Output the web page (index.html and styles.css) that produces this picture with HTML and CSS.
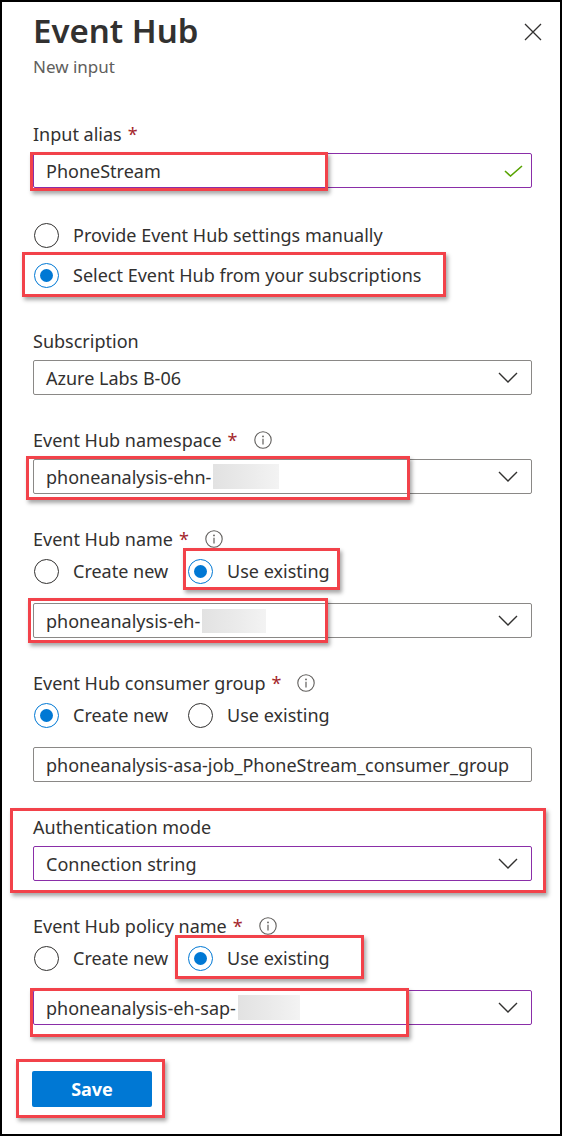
FILE: index.html
```html
<!DOCTYPE html>
<html lang="en">
<head>
<meta charset="utf-8">
<title>Event Hub - New input</title>
<link rel="stylesheet" href="styles.css">
</head>
<body>
<div class="panel">
  <header class="head">
    <div class="titles">
      <h1 class="title">Event Hub</h1>
      <p class="subtitle">New input</p>
    </div>
    <button class="close" type="button" aria-label="Close">
      <svg width="18" height="18" viewBox="0 0 18 18"><path d="M1 1 L17 17 M17 1 L1 17" stroke="#323130" stroke-width="1.3" fill="none"/></svg>
    </button>
  </header>

  <form class="form">
    <div class="field field-first">
      <div class="label">Input alias <span class="req">*</span></div>
      <div class="box dirty">
        <span class="val">PhoneStream</span>
        <svg class="check" width="19" height="12" viewBox="0 0 19 12"><path d="M1 6 L6.5 11 L18 1" stroke="#57a300" stroke-width="1.6" fill="none"/></svg>
        <span class="hl hl-alias"></span>
      </div>
    </div>

    <div class="choices-v">
      <div class="choice"><span class="radio"></span><span>Provide Event Hub settings manually</span></div>
      <div class="choice"><span class="radio on"></span><span>Select Event Hub from your subscriptions</span><span class="hl hl-select"></span></div>
    </div>

    <div class="field field-sub">
      <div class="label">Subscription</div>
      <div class="box">
        <span class="val">Azure Labs B-06</span>
        <svg class="chev" width="20" height="11" viewBox="0 0 20 11"><path d="M1 1 L10 10 L19 1" stroke="#323130" stroke-width="1.4" fill="none"/></svg>
      </div>
    </div>

    <div class="field">
      <div class="label">Event Hub namespace <span class="req">*</span>
        <svg class="info" width="18" height="18" viewBox="0 0 18 18"><circle cx="9" cy="9" r="8.2" stroke="#605e5c" stroke-width="1.1" fill="none"/><circle cx="9" cy="5.4" r="0.9" fill="#605e5c"/><path d="M9 7.8 V13.4" stroke="#605e5c" stroke-width="1.2"/></svg>
      </div>
      <div class="box">
        <span class="val">phoneanalysis-ehn-</span><span class="blur blur-ns"></span>
        <svg class="chev" width="20" height="11" viewBox="0 0 20 11"><path d="M1 1 L10 10 L19 1" stroke="#323130" stroke-width="1.4" fill="none"/></svg>
        <span class="hl hl-ns"></span>
      </div>
    </div>

    <div class="field">
      <div class="label">Event Hub name <span class="req">*</span>
        <svg class="info" width="18" height="18" viewBox="0 0 18 18"><circle cx="9" cy="9" r="8.2" stroke="#605e5c" stroke-width="1.1" fill="none"/><circle cx="9" cy="5.4" r="0.9" fill="#605e5c"/><path d="M9 7.8 V13.4" stroke="#605e5c" stroke-width="1.2"/></svg>
      </div>
      <div class="choices-h">
        <div class="choice"><span class="radio"></span><span>Create new</span></div>
        <div class="choice"><span class="radio on"></span><span>Use existing</span><span class="hl hl-name-opt"></span></div>
      </div>
      <div class="box after-choices">
        <span class="val">phoneanalysis-eh-</span><span class="blur blur-name"></span>
        <svg class="chev" width="20" height="11" viewBox="0 0 20 11"><path d="M1 1 L10 10 L19 1" stroke="#323130" stroke-width="1.4" fill="none"/></svg>
        <span class="hl hl-name"></span>
      </div>
    </div>

    <div class="field">
      <div class="label">Event Hub consumer group <span class="req">*</span>
        <svg class="info" width="18" height="18" viewBox="0 0 18 18"><circle cx="9" cy="9" r="8.2" stroke="#605e5c" stroke-width="1.1" fill="none"/><circle cx="9" cy="5.4" r="0.9" fill="#605e5c"/><path d="M9 7.8 V13.4" stroke="#605e5c" stroke-width="1.2"/></svg>
      </div>
      <div class="choices-h">
        <div class="choice"><span class="radio on"></span><span>Create new</span></div>
        <div class="choice"><span class="radio"></span><span>Use existing</span></div>
      </div>
      <div class="box after-choices">
        <span class="val">phoneanalysis-asa-job_PhoneStream_consumer_group</span>
      </div>
    </div>

    <div class="field">
      <div class="label">Authentication mode</div>
      <div class="box dirty">
        <span class="val">Connection string</span>
        <svg class="chev" width="20" height="11" viewBox="0 0 20 11"><path d="M1 1 L10 10 L19 1" stroke="#323130" stroke-width="1.4" fill="none"/></svg>
      </div>
      <span class="hl hl-auth"></span>
    </div>

    <div class="field">
      <div class="label">Event Hub policy name <span class="req">*</span>
        <svg class="info" width="18" height="18" viewBox="0 0 18 18"><circle cx="9" cy="9" r="8.2" stroke="#605e5c" stroke-width="1.1" fill="none"/><circle cx="9" cy="5.4" r="0.9" fill="#605e5c"/><path d="M9 7.8 V13.4" stroke="#605e5c" stroke-width="1.2"/></svg>
      </div>
      <div class="choices-h">
        <div class="choice"><span class="radio"></span><span>Create new</span></div>
        <div class="choice"><span class="radio on"></span><span>Use existing</span><span class="hl hl-policy-opt"></span></div>
      </div>
      <div class="box dirty after-choices">
        <span class="val">phoneanalysis-eh-sap-</span><span class="blur blur-policy"></span>
        <svg class="chev" width="20" height="11" viewBox="0 0 20 11"><path d="M1 1 L10 10 L19 1" stroke="#323130" stroke-width="1.4" fill="none"/></svg>
        <span class="hl hl-policy"></span>
      </div>
    </div>

    <div class="actions">
      <button class="save" type="button">Save<span class="hl hl-save"></span></button>
    </div>
  </form>
</div>
</body>
</html>
```

FILE: styles.css
```css
html, body {
  margin: 0;
  padding: 0;
  background: #fff;
}

body {
  font-family: "Noto Sans", "Open Sans", sans-serif;
  font-size: 18px;
  color: #323130;
}

.panel {
  position: relative;
  width: 562px;
  height: 1136px;
  box-sizing: border-box;
  border: 2px solid #000;
  padding: 0 28px 0 31px;
  overflow: hidden;
}

.head {
  display: flex;
  justify-content: space-between;
  align-items: flex-start;
}

.title {
  margin: 9px 0 0;
  font-size: 33px;
  font-weight: 600;
  line-height: 40px;
  color: #323130;
}

.subtitle {
  margin: 4px 0 0;
  font-size: 17px;
  line-height: 24px;
  color: #605e5c;
}

.close {
  margin: 21px -10px 0 0;
  padding: 0;
  width: 18px;
  height: 18px;
  border: 0;
  background: none;
  display: flex;
}

.form {
  display: flex;
  flex-direction: column;
}

.field {
  position: relative;
  margin-top: 33px;
}

.field-first {
  margin-top: 43px;
}

.field-sub {
  margin-top: 34px;
}

.label {
  display: flex;
  align-items: center;
  height: 24px;
  line-height: 24px;
  white-space: nowrap;
}

.label + .box {
  margin-top: 7px;
}

.req {
  color: #a4262c;
  margin-left: 6px;
}

.info {
  margin-left: 16px;
}

.box {
  position: relative;
  display: flex;
  align-items: center;
  height: 35px;
  box-sizing: border-box;
  border: 1px solid #8a8886;
  border-radius: 2px;
  padding: 0 13px 0 12px;
  white-space: nowrap;
}

.box.dirty {
  border-color: #8a2ea8;
}

.box.after-choices {
  margin-top: 12px;
}

.check {
  margin-left: auto;
  margin-right: -5px;
}

.chev {
  margin-left: auto;
}

.blur {
  display: inline-block;
  height: 25px;
  margin-left: 2px;
  background: linear-gradient(90deg, #e2e2e2 0%, #e9e9e9 45%, #f3f3f3 100%);
}

.blur-ns { width: 66px; }
.blur-name { width: 64px; height: 24px; }
.blur-policy { width: 62px; }

.choices-v {
  margin-top: 27px;
  padding-left: 1px;
  display: flex;
  flex-direction: column;
}

.choices-h {
  padding-left: 1px;
  display: flex;
  gap: 20px;
}

.choice {
  position: relative;
  display: flex;
  align-items: center;
  gap: 14px;
  height: 40px;
  white-space: nowrap;
}

.radio {
  width: 25px;
  height: 25px;
  box-sizing: border-box;
  border: 1px solid #323130;
  border-radius: 50%;
  display: flex;
  align-items: center;
  justify-content: center;
  flex: none;
}

.radio.on {
  border-color: #0078d4;
}

.radio.on::after {
  content: "";
  width: 13px;
  height: 13px;
  border-radius: 50%;
  background: #0078d4;
}

.actions {
  margin-top: 46px;
}

.save {
  position: relative;
  width: 120px;
  height: 36px;
  border: 0;
  border-radius: 2px;
  background: #0078d4;
  color: #fff;
  font-family: "Noto Sans", "Open Sans", sans-serif;
  font-size: 18px;
  font-weight: 700;
  padding: 0;
  margin-left: -1px;
}

/* red annotation rectangles */
.hl {
  position: absolute;
  box-sizing: border-box;
  border: 3px solid #f2424a;
  box-shadow: 2px 3px 4px rgba(0, 0, 0, 0.35);
  pointer-events: none;
}

.hl-alias { left: -4px; top: -2px; width: 298px; height: 39px; }
.hl-select { left: -12px; top: -3px; width: 424px; height: 45px; }
.hl-ns { left: -8px; top: -4px; width: 384px; height: 44px; }
.hl-name-opt { left: -5px; top: -3px; width: 157px; height: 42px; }
.hl-name { left: -6px; top: -6px; width: 300px; height: 45px; }
.hl-auth { left: -23px; top: -7px; width: 536px; height: 85px; }
.hl-policy-opt { left: -13px; top: -3px; width: 189px; height: 44px; }
.hl-policy { left: -4px; top: -3px; width: 379px; height: 49px; }
.hl-save { left: -16px; top: -12px; width: 149px; height: 59px; }
```
